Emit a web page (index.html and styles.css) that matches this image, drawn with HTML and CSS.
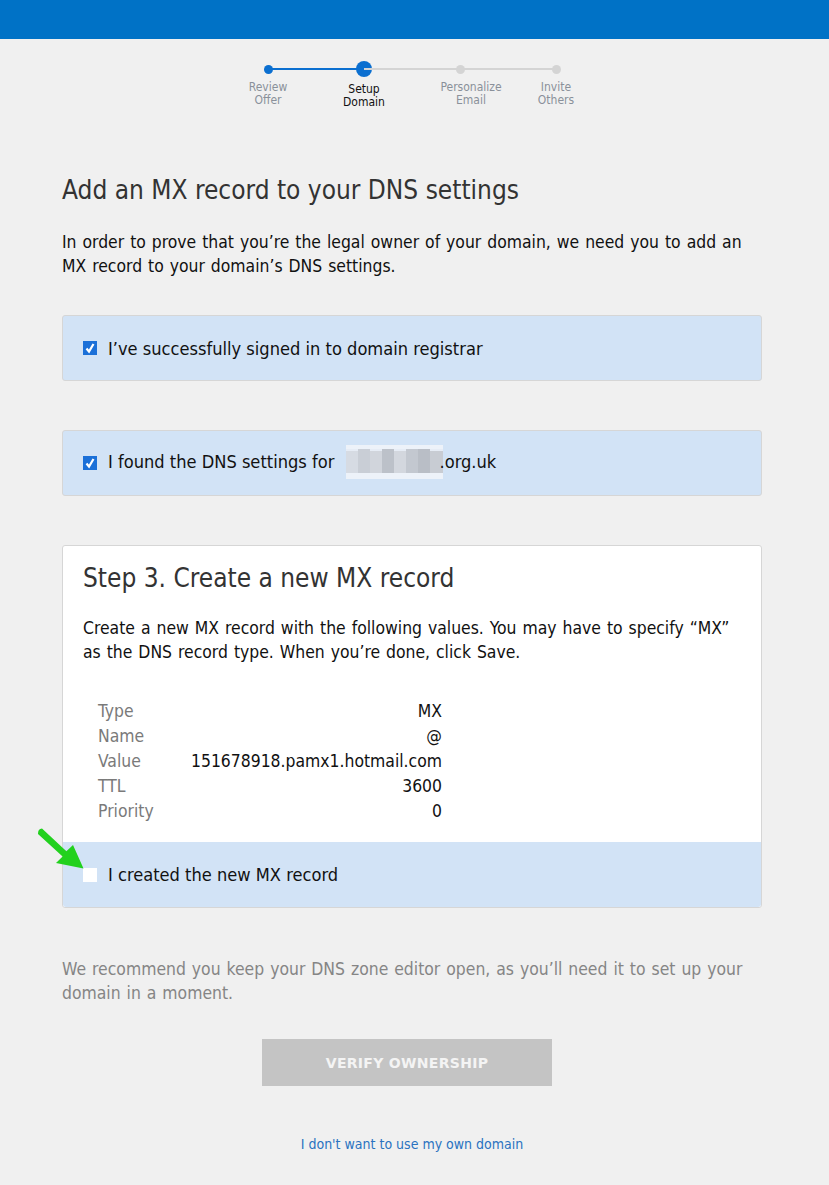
FILE: index.html
```html
<!DOCTYPE html>
<html lang="en">
<head>
<meta charset="UTF-8" />
<title>Setup Domain</title>
<link rel="stylesheet" href="styles.css">
</head>
<body>
<div class="topbar"></div>

<div class="page">
  <div class="stepper">
    <div class="step done">
      <span class="dot"></span>
      <span class="label">Review<br>Offer</span>
    </div>
    <div class="step active">
      <span class="dot"></span>
      <span class="label">Setup<br>Domain</span>
    </div>
    <div class="step">
      <span class="dot"></span>
      <span class="label label-wide">Personalize<br>Email</span>
    </div>
    <div class="step">
      <span class="dot"></span>
      <span class="label">Invite<br>Others</span>
    </div>
  </div>

  <h1 class="title">Add an MX record to your DNS settings</h1>
  <p class="intro">In order to prove that you’re the legal owner of your domain, we need you to add an MX record to your domain’s DNS settings.</p>

  <div class="card check-row">
    <span class="box checked"><svg viewBox="0 0 14 14" width="14" height="14"><path d="M3.5 7.5 L6 10.5 L10.5 3" fill="none" stroke="#fff" stroke-width="2.2"/></svg></span>
    <span>I’ve successfully signed in to domain registrar</span>
  </div>

  <div class="card check-row">
    <span class="box checked"><svg viewBox="0 0 14 14" width="14" height="14"><path d="M3.5 7.5 L6 10.5 L10.5 3" fill="none" stroke="#fff" stroke-width="2.2"/></svg></span>
    <span>I found the DNS settings for <svg class="blur" viewBox="0 0 97 34" width="97" height="34">
      <rect width="97" height="34" fill="#e6ecf5"/>
      <rect x="0" y="6" width="12" height="22" fill="#d6dbe3"/>
      <rect x="12" y="4" width="12" height="24" fill="#c9ced6"/>
      <rect x="24" y="6" width="12" height="22" fill="#d1d5dc"/>
      <rect x="36" y="4" width="12" height="24" fill="#bcc1c9"/>
      <rect x="48" y="6" width="12" height="22" fill="#d3d7de"/>
      <rect x="60" y="4" width="12" height="24" fill="#c3c8d0"/>
      <rect x="72" y="4" width="12" height="24" fill="#b9bec6"/>
      <rect x="84" y="6" width="13" height="22" fill="#c8ccd3"/>
      <rect x="0" y="0" width="97" height="4" fill="#edf2f9"/>
      <rect x="0" y="28" width="97" height="6" fill="#edf2f9"/>
    </svg>.org.uk</span>
  </div>

  <div class="card record">
    <div class="record-body">
      <h2 class="title">Step 3. Create a new MX record</h2>
      <p class="record-text">Create a new MX record with the following values. You may have to specify “MX” as the DNS record type. When you’re done, click Save.</p>
      <table class="values">
        <tr><td>Type</td><td>MX</td></tr>
        <tr><td>Name</td><td>@</td></tr>
        <tr><td>Value</td><td>151678918.pamx1.hotmail.com</td></tr>
        <tr><td>TTL</td><td>3600</td></tr>
        <tr><td>Priority</td><td>0</td></tr>
      </table>
    </div>
    <div class="check-row record-check">
      <span class="box"></span>
      <span>I created the new MX record</span>
    </div>
    <svg class="arrow" viewBox="0 0 50 45" width="50" height="45">
      <path d="M6 1.6 L30.4 24.2 L37 18 L47.5 41.5 L20 36 L26.6 29.6 L2 7 Q1.8 2 6 1.6 Z" fill="#22d11e"/>
    </svg>
  </div>

  <p class="note">We recommend you keep your DNS zone editor open, as you’ll need it to set up your domain in a moment.</p>

  <div class="actions">
    <button class="verify" disabled>Verify Ownership</button>
    <a class="skip" href="#">I don't want to use my own domain</a>
  </div>
</div>
</body>
</html>
```

FILE: styles.css
```css
body {
  margin: 0;
  background: #f0f0f0;
  color: #111;
  font-family: "DejaVu Sans Condensed", "DejaVu Sans", sans-serif;
  font-stretch: condensed;
}
.topbar {
  height: 39px;
  background: #0072c6;
}
.page {
  width: 700px;
  margin-left: 62px;
}
/* Progress steps */
.stepper {
  display: flex;
  justify-content: center;
  margin-top: 22px;
}
.step {
  position: relative;
  width: 96px;
  display: flex;
  flex-direction: column;
  align-items: center;
}
.step::before {
  content: "";
  position: absolute;
  top: 7px;
  left: -48px;
  width: 96px;
  height: 2px;
  background: #d4d4d4;
}
.step:first-child::before {
  display: none;
}
.step.done::before,
.step.active::before {
  background: #0b6fd0;
}
.dot {
  position: relative;
  width: 9px;
  height: 9px;
  margin: 4px 0 7px;
  border-radius: 50%;
  background: #d4d4d4;
}
.step.done .dot {
  background: #0b6fd0;
}
.step.active .dot {
  width: 16px;
  height: 16px;
  margin: 0 0 6px;
  background: #0b6fd0;
}
.label {
  font-size: 12px;
  line-height: 13px;
  text-align: center;
  color: #8a909a;
}
.label-wide {
  margin-left: 22px;
}
.step.active .label {
  color: #111;
}
/* Text */
.title {
  margin: 0;
  font-size: 26px;
  font-weight: normal;
  color: #333;
}
.page > .title {
  margin-top: 66px;
}
.intro,
.record-text,
.note {
  font-size: 17.4px;
  line-height: 24px;
  word-spacing: 1px;
}
.intro {
  margin: 25px 0 0;
}
/* Cards */
.card {
  margin-top: 37px;
  background: #d2e3f6;
  border: 1px solid #d6d6d6;
  border-radius: 3px;
}
.card + .card {
  margin-top: 49px;
}
.check-row {
  display: flex;
  align-items: center;
  gap: 11px;
  height: 64px;
  padding-left: 20px;
  font-size: 18.1px;
}
.box {
  display: block;
  width: 14px;
  height: 14px;
  background: #fff;
}
.box.checked {
  background: #1b70d8;
}
.box svg {
  display: block;
}
.blur {
  vertical-align: middle;
  margin: -6px -3px -4px 6px;
}
.record {
  position: relative;
  background: #fff;
}
.record-body {
  padding: 17px 20px 19px 20px;
}
.record-text {
  margin: 23px 0 0;
}
.values {
  margin: 34px 0 0 15px;
  width: 344px;
  border-collapse: collapse;
  font-size: 17.4px;
}
.values td {
  padding: 0;
  height: 25px;
}
.values td:first-child {
  color: #7a7a7a;
}
.values td:last-child {
  text-align: right;
}
.record-check {
  height: 65px;
  background: #d2e3f6;
  border-radius: 0 0 3px 3px;
}
.arrow {
  position: absolute;
  left: -27px;
  bottom: 35px;
}
.note {
  margin: 49px 0 0;
  color: #858585;
}
.actions {
  display: flex;
  flex-direction: column;
  align-items: center;
}
.verify {
  margin: 34px 10px 0 0;
  width: 290px;
  height: 47px;
  border: none;
  background: #c4c4c4;
  color: #f4f4f4;
  font-family: "DejaVu Sans", sans-serif;
  font-weight: bold;
  font-size: 14px;
  letter-spacing: 0.3px;
  text-transform: uppercase;
}
.skip {
  margin-top: 50px;
  font-size: 14px;
  color: #2a73c0;
  text-decoration: none;
}
```
